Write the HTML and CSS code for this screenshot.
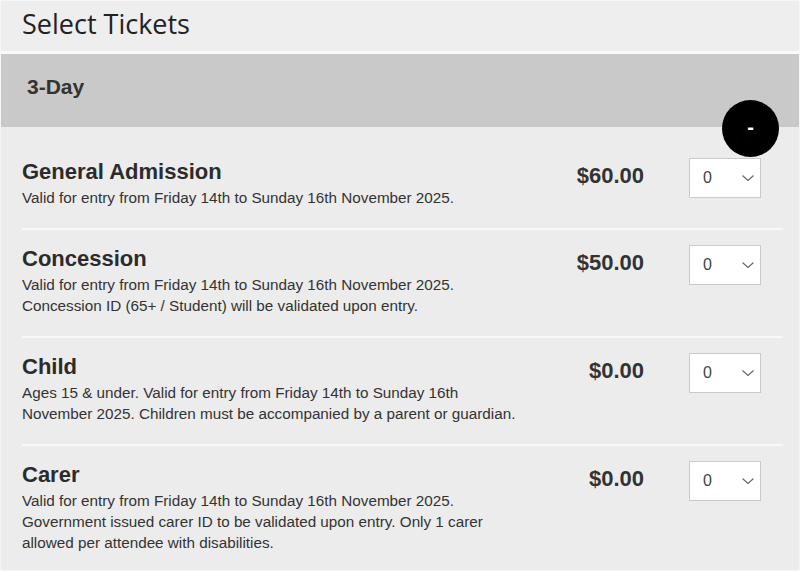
FILE: index.html
```html
<!DOCTYPE html>
<html lang="en">
<head>
<meta charset="utf-8">
<title>Select Tickets</title>
<link rel="stylesheet" href="styles.css">
</head>
<body>
<div class="page">
  <header class="page-header">
    <h1 class="page-title">Select Tickets</h1>
  </header>
  <div class="band">
    <h2 class="band-title">3-Day</h2>
  </div>
  <div class="ticket-list">
    <div class="ticket">
      <div class="ticket-info">
        <h3 class="ticket-name">General Admission</h3>
        <p class="ticket-desc">Valid for entry from Friday 14th to Sunday 16th November 2025.</p>
      </div>
      <div class="ticket-price">$60.00</div>
      <div class="qty"><span class="qty-value">0</span><svg class="chev" width="12" height="6" viewBox="0 0 12 6"><polyline points="0.5,0.5 6,5.5 11.5,0.5" fill="none" stroke="#6a6a6a" stroke-width="1.2"/></svg></div>
    </div>
    <div class="ticket">
      <div class="ticket-info">
        <h3 class="ticket-name">Concession</h3>
        <p class="ticket-desc">Valid for entry from Friday 14th to Sunday 16th November 2025. Concession ID (65+ / Student) will be validated upon entry.</p>
      </div>
      <div class="ticket-price">$50.00</div>
      <div class="qty"><span class="qty-value">0</span><svg class="chev" width="12" height="6" viewBox="0 0 12 6"><polyline points="0.5,0.5 6,5.5 11.5,0.5" fill="none" stroke="#6a6a6a" stroke-width="1.2"/></svg></div>
    </div>
    <div class="ticket">
      <div class="ticket-info">
        <h3 class="ticket-name">Child</h3>
        <p class="ticket-desc">Ages 15 &amp; under. Valid for entry from Friday 14th to Sunday 16th November 2025. Children must be accompanied by a parent or guardian.</p>
      </div>
      <div class="ticket-price">$0.00</div>
      <div class="qty"><span class="qty-value">0</span><svg class="chev" width="12" height="6" viewBox="0 0 12 6"><polyline points="0.5,0.5 6,5.5 11.5,0.5" fill="none" stroke="#6a6a6a" stroke-width="1.2"/></svg></div>
    </div>
    <div class="ticket">
      <div class="ticket-info">
        <h3 class="ticket-name">Carer</h3>
        <p class="ticket-desc">Valid for entry from Friday 14th to Sunday 16th November 2025. Government issued carer ID to be validated upon entry. Only 1 carer allowed per attendee with disabilities.</p>
      </div>
      <div class="ticket-price">$0.00</div>
      <div class="qty"><span class="qty-value">0</span><svg class="chev" width="12" height="6" viewBox="0 0 12 6"><polyline points="0.5,0.5 6,5.5 11.5,0.5" fill="none" stroke="#6a6a6a" stroke-width="1.2"/></svg></div>
    </div>
  </div>
  <div class="fab">-</div>
</div>
</body>
</html>
```

FILE: styles.css
```css
* { box-sizing: border-box; }
html, body { margin: 0; padding: 0; }
body {
  background: #ececec;
  font-family: "Liberation Sans", Arial, sans-serif;
  color: #333;
  overflow: hidden;
}
.page {
  position: relative;
  width: 800px;
  height: 571px;
  border: 1px solid #f6f6f6;
  background: #ececec;
  overflow: hidden;
}
.page-header {
  height: 53px;
  background: #eeeeee;
  border-bottom: 3px solid #fafafa;
  padding: 4px 0 0 21px;
}
.page-title {
  margin: 0;
  font-family: "Open Sans", sans-serif;
  font-weight: 400;
  font-size: 27px;
  line-height: 37px;
  color: #222;
}
.band {
  height: 73px;
  background: #c9c9c9;
  padding: 19px 0 0 26px;
}
.band-title {
  margin: 0;
  font-size: 21px;
  line-height: 28px;
  font-weight: 700;
  color: #333;
}
.ticket-list {
  padding: 16px 16px 0 21px;
}
.ticket {
  display: flex;
  align-items: flex-start;
  padding: 14px 22px 20px 0;
  border-bottom: 2px solid #f8f8f8;
}
.ticket:last-child { border-bottom: none; }
.ticket-info {
  width: 500px;
  flex-shrink: 0;
}
.ticket-name {
  margin: 0;
  font-size: 22px;
  line-height: 30px;
  font-weight: 700;
  color: #2b2b2b;
}
.ticket-desc {
  margin: 0;
  font-size: 15.25px;
  line-height: 21px;
  color: #333;
}
.ticket-price {
  flex: 1;
  text-align: right;
  font-size: 22px;
  font-weight: 700;
  line-height: 38px;
  color: #333;
  margin-right: 45px;
}
.qty {
  margin-top: 1px;
  width: 72px;
  height: 40px;
  background: #fff;
  border: 1px solid #cacaca;
  display: flex;
  align-items: center;
  justify-content: space-between;
  padding: 0 6px 0 13px;
}
.qty-value {
  font-size: 16px;
  color: #444;
}
.chev { display: block; }
.fab {
  position: absolute;
  left: 721px;
  top: 99px;
  width: 57px;
  height: 57px;
  border-radius: 50%;
  background: #000;
  color: #fff;
  font-weight: 700;
  font-size: 20px;
  line-height: 55px;
  text-align: center;
}
```
